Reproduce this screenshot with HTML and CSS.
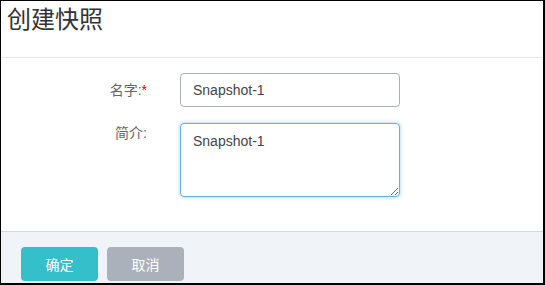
FILE: index.html
```html
<!DOCTYPE html>
<html lang="zh-CN">
<head>
    <meta charset="UTF-8">
    <title>创建快照</title>
    <link rel="stylesheet" href="styles.css">
</head>
<body>
    <div class="dialog">
        <div class="dialog-header">
            <h3 class="dialog-title">创建快照</h3>
        </div>

        <!-- form body -->
        <div class="dialog-body">
            <div class="form-row">
                <label class="form-label">名字:<span class="required">*</span></label>
                <input class="form-input" type="text" value="Snapshot-1">
            </div>
            <div class="form-row">
                <label class="form-label form-label-top">简介:</label>
                <textarea class="form-textarea is-focus">Snapshot-1</textarea>
            </div>
        </div>

        <div class="dialog-footer">
            <button class="btn btn-primary">确定</button>
            <button class="btn btn-default">取消</button>
        </div>
    </div>
</body>
</html>
```

FILE: styles.css
```css
body {
    margin: 0;
    padding: 0;
    background-color: #fff;
    font-family: "Liberation Sans", "Noto Sans CJK SC", sans-serif;
}
.dialog {
    box-sizing: border-box;
    width: 545px;
    height: 285px;
    border: 1px solid #000;
    border-right-width: 2px;
    border-bottom-width: 2px;
    display: flex;
    flex-direction: column;
    background-color: #fff;
}
.dialog-header {
    height: 56px;
    border-bottom: 1px solid #e3e5e8;
}
.dialog-title {
    margin: 0;
    padding: 2px 0 0 6px;
    font-size: 24px;
    font-weight: normal;
    line-height: 33px;
    color: #333;
}
.dialog-body {
    flex: 1;
    padding-top: 15px;
}
.form-row {
    display: flex;
    align-items: flex-start;
    margin-bottom: 16px;
}
.form-label {
    width: 146px;
    text-align: right;
    font-size: 14px;
    line-height: 34px;
    color: #666;
}
.form-label-top {
    line-height: 20px;
}
.required {
    color: #f00;
}
.form-input,
.form-textarea {
    box-sizing: border-box;
    margin-left: 33px;
    width: 220px;
    border: 1px solid #a9afba;
    border-radius: 4px;
    font-family: "Liberation Sans", "Noto Sans CJK SC", sans-serif;
    font-size: 14px;
    color: #444;
    outline: none;
}
.form-input {
    height: 34px;
    padding: 0 12px;
}
.form-textarea {
    height: 74px;
    padding: 7px 12px;
    line-height: 20px;
    resize: both;
}
.form-textarea.is-focus {
    border-color: #66afe9;
    box-shadow: 0 0 4px rgba(102, 175, 233, 0.6);
}
.dialog-footer {
    height: 52px;
    box-sizing: border-box;
    border-top: 1px solid #d3d6db;
    background-color: #f0f4f9;
    padding: 15px 20px 0;
    display: flex;
    gap: 9px;
}
.btn {
    width: 77px;
    height: 34px;
    border: none;
    border-radius: 4px;
    font-family: "Liberation Sans", "Noto Sans CJK SC", sans-serif;
    font-size: 14px;
    color: #fff;
    cursor: pointer;
}
.btn-primary {
    background-color: #35bfcb;
}
.btn-default {
    background-color: #abb1bb;
}
```
